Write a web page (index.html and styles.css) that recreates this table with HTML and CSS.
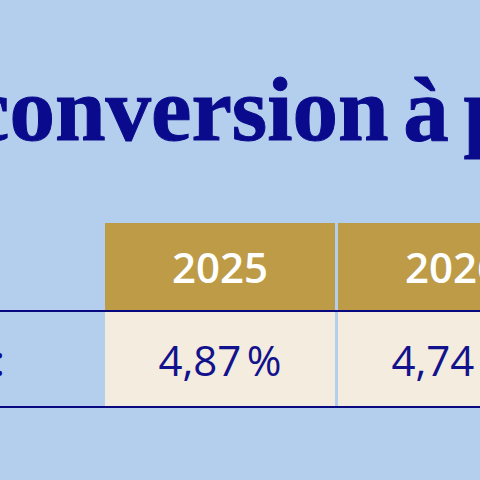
FILE: index.html
```html
<!DOCTYPE html>
<html lang="fr">
<head>
    <meta charset="UTF-8">
    <meta name="viewport" content="width=device-width, initial-scale=1.0">
    <title>Taux de conversion</title>
    <link rel="stylesheet" href="styles.css">
</head>
<body>

    <div class="sheet">
        <h1 class="title">conversion à partir de 2025</h1>

        <div class="rates">
            <div class="rates-row rates-head">
                <div class="cell label"></div>
                <div class="cell year">2025</div>
                <div class="cell year">2026</div>
            </div>
            <div class="rates-row">
                <div class="cell label">Taux :</div>
                <div class="cell value">4,87&#8239;%</div>
                <div class="cell value">4,74&#8239;%</div>
            </div>
        </div>
    </div>

</body>
</html>
```

FILE: styles.css
```css
html, body {
    margin: 0;
    padding: 0;
}

body {
    background-color: #b4cfee;
    color: #0b0b8c;
    font-family: "Open Sans", "Liberation Sans", sans-serif;
    overflow: hidden;
    width: 480px;
    height: 480px;
}

.sheet {
    padding-top: 64px;
}

.title {
    margin: 0 0 0 -31px;
    font-family: "Liberation Serif", serif;
    font-weight: bold;
    font-size: 91px;
    line-height: 1;
    word-spacing: -8px;
    white-space: nowrap;
    color: #0a0a8c;
    -webkit-text-stroke: 1px #0a0a8c;
}

.rates {
    margin-top: 68px;
    width: 800px;
}

.rates-row {
    display: grid;
    grid-template-columns: 102px 230px 230px;
    column-gap: 3px;
    border-bottom: 2px solid #08087f;
}

.cell {
    display: flex;
    align-items: center;
    justify-content: center;
    font-size: 42px;
    white-space: nowrap;
    min-height: 94px;
}

.rates-head .cell {
    min-height: 87px;
}

.label {
    justify-content: flex-end;
    padding-right: 97px;
}

.year {
    background-color: #bd9b47;
    color: #fff;
    font-weight: 600;
}

.value {
    background-color: #f3ecdf;
    color: #12128c;
    letter-spacing: 1px;
}
```
